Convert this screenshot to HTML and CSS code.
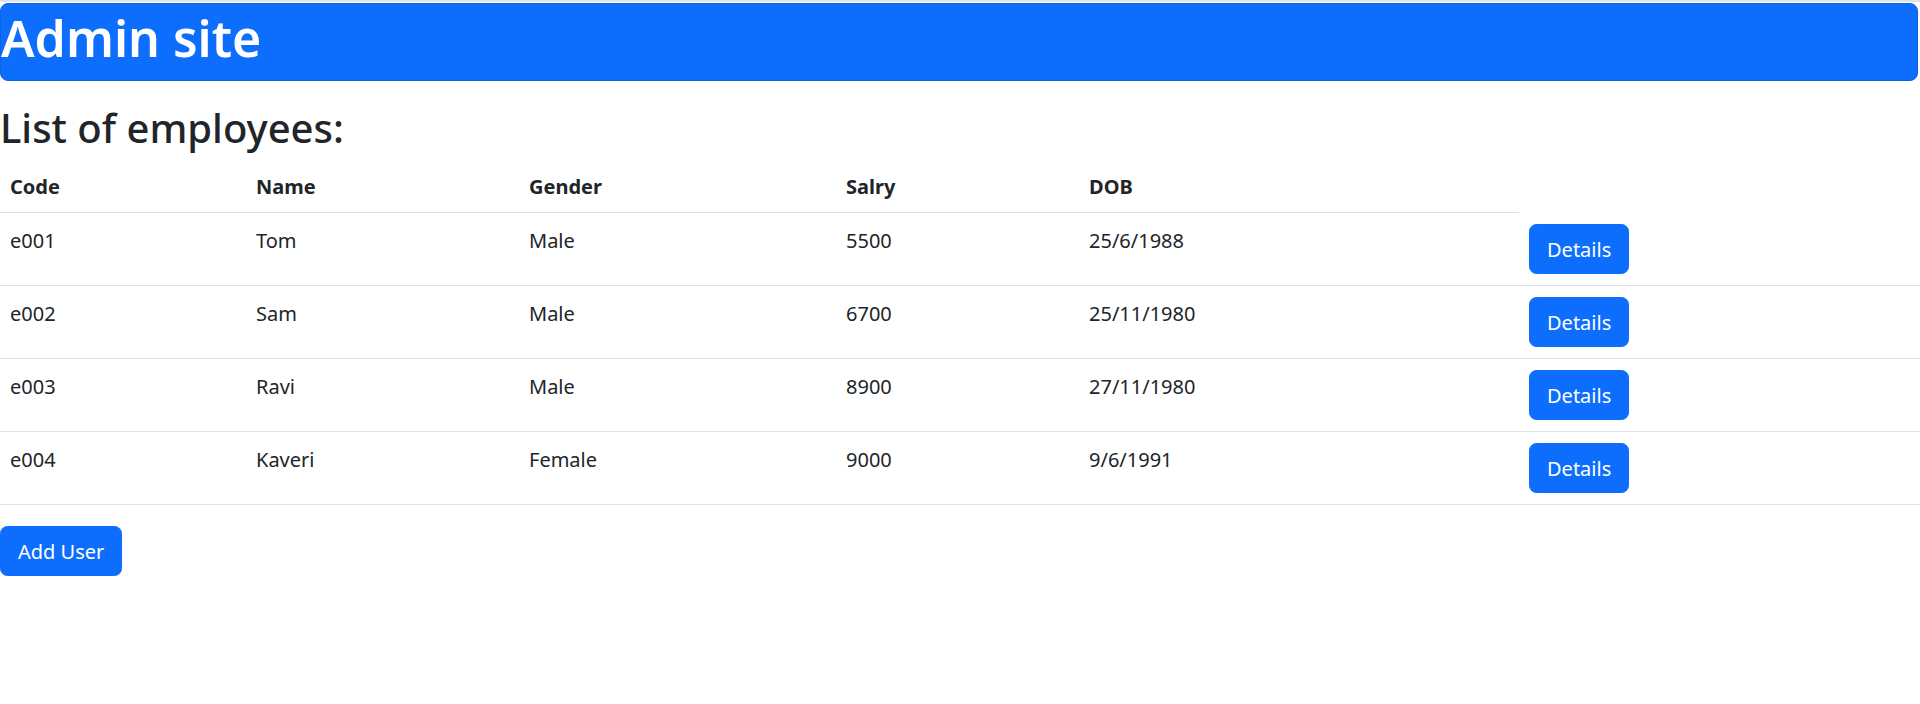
FILE: index.html
```html
<!DOCTYPE html>
<html lang="en">
<head>
<meta charset="utf-8">
<title>Admin site</title>
<link rel="stylesheet" href="styles.css">
</head>
<body>
<div class="topline"></div>
<header class="banner">
  <h1 class="banner-title">Admin site</h1>
</header>
<main class="content">
  <h2 class="list-title">List of employees:</h2>
  <table class="emp-table">
    <colgroup>
      <col class="c-code"><col class="c-name"><col class="c-gender"><col class="c-salary"><col class="c-dob"><col class="c-action">
    </colgroup>
    <thead>
      <tr><th>Code</th><th>Name</th><th>Gender</th><th>Salry</th><th>DOB</th></tr>
    </thead>
    <tbody>
      <tr><td>e001</td><td>Tom</td><td>Male</td><td>5500</td><td>25/6/1988</td><td class="act"><button class="btn">Details</button></td></tr>
      <tr><td>e002</td><td>Sam</td><td>Male</td><td>6700</td><td>25/11/1980</td><td class="act"><button class="btn">Details</button></td></tr>
      <tr><td>e003</td><td>Ravi</td><td>Male</td><td>8900</td><td>27/11/1980</td><td class="act"><button class="btn">Details</button></td></tr>
      <tr><td>e004</td><td>Kaveri</td><td>Female</td><td>9000</td><td>9/6/1991</td><td class="act"><button class="btn">Details</button></td></tr>
    </tbody>
  </table>
  <button class="btn">Add User</button>
</main>
</body>
</html>
```
FILE: styles.css
```css
html, body {
  margin: 0;
  padding: 0;
  background: #fff;
}
body {
  font-family: "Segoe UI", "Noto Sans", "Liberation Sans", sans-serif;
  font-size: 20px;
  line-height: 1.5;
  color: #212529;
}
.topline {
  height: 2px;
  background: #e2e2e2;
}
.banner {
  margin: 1px 2px 0 0;
  height: 78px;
  box-sizing: border-box;
  background: #0d6efd;
  border: 1px solid #0b63e4;
  border-radius: 8px;
}
.banner-title {
  margin: 0;
  padding-top: 4px;
  font-size: 50px;
  font-weight: 600;
  line-height: 60px;
  color: #fff;
  white-space: nowrap;
}
.content {
  padding-top: 23px;
}
.list-title {
  margin: 0 0 10px;
  font-size: 40px;
  font-weight: 500;
  line-height: 48px;
}
.emp-table {
  width: 100%;
  table-layout: fixed;
  border-collapse: collapse;
  margin-bottom: 21px;
}
.c-code { width: 246px; }
.c-name { width: 273px; }
.c-gender { width: 317px; }
.c-salary { width: 243px; }
.c-dob { width: 440px; }
.emp-table th,
.emp-table td {
  padding: 10px 10px;
  text-align: left;
  vertical-align: top;
  border-bottom: 1px solid #dee2e6;
  line-height: 30px;
}
.emp-table td {
  padding: 13px 10px 7px;
}
.emp-table th {
  font-weight: 700;
}
.emp-table td.act {
  padding: 11px 10px 11px;
}
.btn {
  display: inline-block;
  box-sizing: border-box;
  height: 50px;
  padding: 3px 17px 0;
  font-family: inherit;
  font-size: 20px;
  line-height: 30px;
  color: #fff;
  background: #0d6efd;
  border: 1px solid #0d6efd;
  border-radius: 7.5px;
  cursor: pointer;
}
```
